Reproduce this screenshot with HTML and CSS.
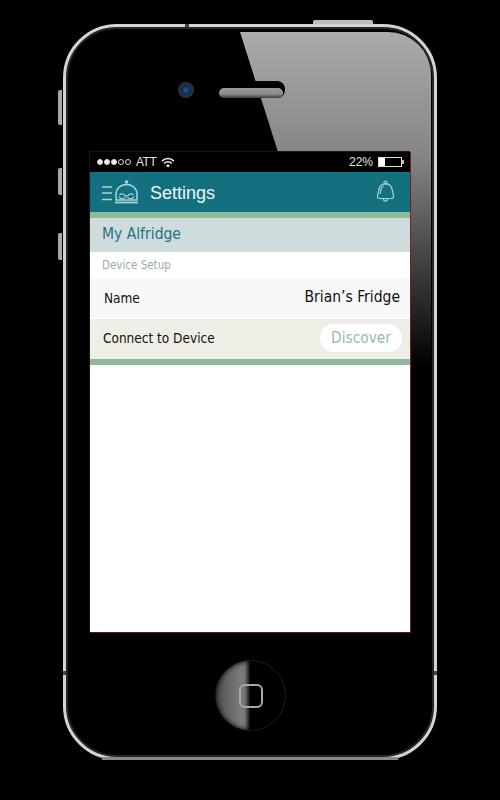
FILE: index.html
```html
<!DOCTYPE html>
<html lang="en">
<head>
    <meta charset="UTF-8">
    <title>Settings - My Alfridge</title>
    <link rel="stylesheet" href="styles.css">
</head>
<body>
    <div class="phone">
        <svg class="glass" width="368" height="733" viewBox="0 0 368 733">
            <defs>
                <linearGradient id="glassFade" x1="0" y1="0" x2="0" y2="1">
                    <stop offset="0" stop-color="#ababab"/>
                    <stop offset="0.37" stop-color="#858585"/>
                    <stop offset="1" stop-color="#000"/>
                </linearGradient>
            </defs>
            <path d="M174 5H322A43 43 0 0 1 365 48V340H280Z" fill="url(#glassFade)"/>
        </svg>

        <span class="side-btn mute"></span>
        <span class="side-btn vol-up"></span>
        <span class="side-btn vol-down"></span>
        <span class="top-btn"></span>
        <span class="lip"></span>
        <span class="notch notch-top"></span>
        <span class="notch notch-left"></span>
        <span class="notch notch-right"></span>

        <div class="phone-top">
            <div class="camera"><span class="lens"></span></div>
            <div class="speaker"><span class="mesh"></span></div>
        </div>

        <div class="screen">
            <div class="status">
                <div class="signal">
                    <span class="dot on"></span><span class="dot on"></span><span class="dot on"></span><span class="dot"></span><span class="dot"></span>
                </div>
                <span class="carrier">ATT</span>
                <svg class="wifi" width="14" height="11" viewBox="0 0 14 11">
                    <path d="M1 4.2C4.5 .6 9.5 .6 13 4.2M3.2 6.4C5.4 4.2 8.6 4.2 10.8 6.4" fill="none" stroke="#eee" stroke-width="1.7"/>
                    <path d="M5 8.4C6.2 7.2 7.8 7.2 9 8.4L7 10.6Z" fill="#eee"/>
                </svg>
                <span class="percent">22%</span>
                <div class="battery"><span class="charge"></span></div>
            </div>

            <div class="nav">
                <svg class="logo" width="38" height="26" viewBox="0 0 38 26" fill="none" stroke="#a9d3d7">
                    <path d="M0 8H10M0 14H10M0 20.5H10" stroke-width="1.5"/>
                    <circle cx="24.5" cy="3" r="1.8" fill="#a9d3d7" stroke="none"/>
                    <path d="M14 21V15.5C14 9.5 18.5 5.5 24.5 5.5S35 9.5 35 15.5V21Z" stroke-width="1.5"/>
                    <path d="M13 23.5H36" stroke-width="1.8"/>
                    <path d="M17.5 16C18.5 14.5 21.5 14.5 23 16.5C24 17.3 25 17.3 26 16.5C27.5 14.5 30.5 14.5 31.5 16" stroke-width="1.3"/>
                    <path d="M17 17.5C18.5 20.5 22 20.5 23.5 18M25.5 18C27 20.5 30.5 20.5 32 17.5" stroke-width="1.3"/>
                </svg>
                <span class="nav-title">Settings</span>
                <svg class="bell" width="19" height="24" viewBox="0 0 19 24" fill="none" stroke="#a9d3d7" stroke-width="1.2">
                    <circle cx="9.5" cy="2.5" r="1.5"/>
                    <path d="M4 18.5H15.5C17 18.5 17.8 17.6 17.6 16L16 9C15.2 5.5 12.8 3.8 9.5 3.8S3.8 5.5 3 9L1.5 16C1.2 17.6 2 18.5 4 18.5Z"/>
                    <path d="M4.2 14L5 9.5C5.4 7.8 6.4 6.7 7.8 6.2"/>
                    <path d="M7.5 19C7.5 21.8 11.5 21.8 11.5 19"/>
                </svg>
            </div>
            <div class="stripe"></div>

            <div class="heading">My Alfridge</div>
            <div class="section-label">Device Setup</div>

            <div class="row row-name">
                <span class="row-label">Name</span>
                <span class="row-value">Brian’s Fridge</span>
            </div>
            <div class="row row-connect">
                <span class="row-label">Connect to Device</span>
                <button class="discover" type="button">Discover</button>
            </div>
            <div class="stripe"></div>
        </div>

        <div class="home"><span class="home-square"></span></div>
    </div>
</body>
</html>
```

FILE: styles.css
```css
body {
    margin: 0;
    background-color: #000;
    font-family: "Liberation Sans", Arial, sans-serif;
    overflow: hidden;
}
.phone {
    position: relative;
    box-sizing: border-box;
    width: 374px;
    height: 736px;
    margin: 24px 0 0 63px;
    padding: 0 23px 0 24px;
    border: 3px solid #d4d4d4;
    border-radius: 54px;
    box-shadow: inset 0 0 0 2px #262626;
}
.glass {
    position: absolute;
    left: 0;
    top: 0;
}

/* hardware */
.side-btn {
    position: absolute;
    left: -8px;
    width: 4px;
    background-color: #a8a8a8;
    border-radius: 2px 0 0 2px;
}
.mute {
    top: 63px;
    height: 35px;
}
.vol-up {
    top: 141px;
    height: 27px;
}
.vol-down {
    top: 206px;
    height: 27px;
}
.top-btn {
    position: absolute;
    left: 247px;
    top: -7px;
    width: 60px;
    height: 4px;
    background-color: #bdbdbd;
    border-radius: 2px 2px 0 0;
}
.lip {
    position: absolute;
    left: 36px;
    right: 36px;
    bottom: -4px;
    height: 4px;
    background-color: #8a8a8a;
}
.notch {
    position: absolute;
    background-color: #444;
}
.notch-top {
    left: 119px;
    top: -3px;
    width: 4px;
    height: 3px;
}
.notch-left {
    left: -3px;
    top: 644px;
    width: 3px;
    height: 4px;
}
.notch-right {
    right: -3px;
    top: 644px;
    width: 3px;
    height: 4px;
}
.phone-top {
    position: relative;
    display: flex;
    align-items: center;
    gap: 25px;
    height: 125px;
    padding-left: 88px;
}
.camera {
    display: flex;
    justify-content: center;
    align-items: center;
    width: 16px;
    height: 16px;
    border-radius: 50%;
    background: radial-gradient(circle, #1a2a40 30%, #2c343a 70%, #3a4248 100%);
}
.lens {
    width: 6px;
    height: 6px;
    border-radius: 50%;
    background-color: #1246a8;
}
.speaker {
    display: flex;
    align-items: flex-end;
    box-sizing: border-box;
    width: 66px;
    height: 17px;
    padding: 0 2px 0 0;
    border-radius: 8px;
    background-color: #000;
}
.mesh {
    width: 64px;
    height: 10px;
    border-radius: 5px;
    background: linear-gradient(#9a9a9a, #8a8a8a 60%, #3c3c3c);
}

/* screen */
.screen {
    position: relative;
    box-sizing: border-box;
    width: 321px;
    height: 481px;
    background-color: #fff;
    border-right: 1px solid #7a1c24;
    border-bottom: 1px solid #6b0f16;
    box-shadow: -1px -1px 0 #161616;
}
.status {
    display: flex;
    align-items: center;
    height: 20px;
    padding: 0 6px 0 7px;
    background-color: #000;
    color: #e4e4e4;
    font-size: 12px;
}
.signal {
    display: flex;
    gap: 1px;
}
.dot {
    box-sizing: border-box;
    width: 6px;
    height: 6px;
    border: 1px solid #ddd;
    border-radius: 50%;
}
.dot.on {
    background-color: #eee;
}
.carrier {
    margin-left: 5px;
    letter-spacing: -.5px;
}
.wifi {
    margin-left: 5px;
}
.percent {
    margin-left: auto;
}
.battery {
    position: relative;
    box-sizing: border-box;
    width: 24px;
    height: 10px;
    margin: 0 2px 0 5px;
    border: 1px solid #ddd;
    background-color: #000;
}
.battery::after {
    content: "";
    position: absolute;
    right: -3px;
    top: 2px;
    width: 2px;
    height: 4px;
    background-color: #bbb;
}
.charge {
    display: block;
    width: 6px;
    height: 100%;
    background-color: #fff;
}
.nav {
    display: flex;
    align-items: center;
    height: 40px;
    padding: 0 15px 0 12px;
    background-color: #13707f;
}
.nav-title {
    margin: 2px 0 0 10px;
    color: #eef6f6;
    font-size: 18px;
}
.bell {
    margin-left: auto;
}
.stripe {
    height: 6px;
    background-color: #8fb99a;
}
.heading {
    display: flex;
    align-items: center;
    height: 32px;
    padding: 0 0 2px 12px;
    background-color: #cfdcdd;
    color: #1f7382;
    font-family: "DejaVu Sans", sans-serif;
    font-stretch: condensed;
    font-size: 15.5px;
}
.section-label {
    display: flex;
    align-items: center;
    height: 26px;
    padding-left: 12px;
    color: #95abaf;
    font-family: "DejaVu Sans", sans-serif;
    font-stretch: condensed;
    font-size: 11.5px;
}
.row {
    display: flex;
    justify-content: space-between;
    align-items: center;
    font-family: "DejaVu Sans", sans-serif;
    font-stretch: condensed;
    color: #111;
}
.row-name {
    height: 40px;
    padding: 0 10px 0 14px;
    margin-bottom: 1px;
    background-color: #f8f8f8;
}
.row-connect {
    height: 38px;
    padding: 0 8px 2px 13px;
    background-color: #eeeee6;
}
.row-label {
    font-size: 13.5px;
}
.row-value {
    margin-top: -3px;
    font-size: 15.5px;
}
.discover {
    width: 82px;
    height: 28px;
    padding: 0;
    border: none;
    border-radius: 14px;
    background-color: #fff;
    color: #93bd9f;
    font-family: inherit;
    font-stretch: inherit;
    font-size: 15.3px;
}

/* home button */
.home {
    position: relative;
    display: flex;
    justify-content: center;
    align-items: center;
    box-sizing: border-box;
    width: 71px;
    height: 71px;
    margin: 27px auto 0;
    border: 1px solid #1c1c1c;
    border-radius: 50%;
    background: linear-gradient(90deg, #4e4e4e 0, #7c7c7c 36%, #747474 42%, #000 50%);
    box-shadow: inset 0 0 5px #000;
}
.home-square {
    box-sizing: border-box;
    width: 24px;
    height: 24px;
    border: 2px solid #a8a8a8;
    border-radius: 6px;
}
```
